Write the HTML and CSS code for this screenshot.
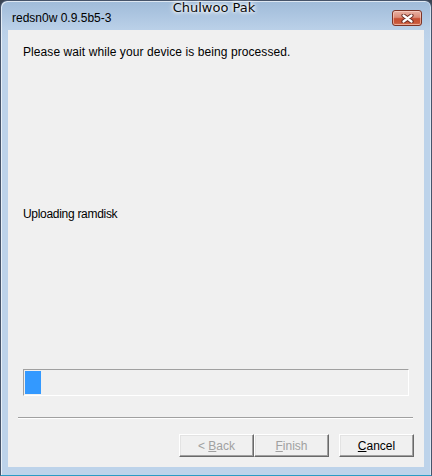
FILE: index.html
```html
<!DOCTYPE html>
<html lang="en">
<head>
<meta charset="utf-8">
<title>redsn0w 0.9.5b5-3</title>
<link rel="stylesheet" href="styles.css">
</head>
<body>
<div class="window">
  <div class="titlebar">
    <span class="app-title">redsn0w 0.9.5b5-3</span>
    <span class="caption">Chulwoo Pak</span>
    <button class="close" aria-label="Close">
      <svg width="13" height="9" viewBox="0 0 13 9">
        <path d="M2.5 1.5 L10.5 7.5 M10.5 1.5 L2.5 7.5" stroke="#6a2b22" stroke-width="4.2" stroke-linecap="round" fill="none"/>
        <path d="M2.5 1.5 L10.5 7.5 M10.5 1.5 L2.5 7.5" stroke="#ffffff" stroke-width="2.2" stroke-linecap="round" fill="none"/>
      </svg>
    </button>
  </div>
  <div class="client">
    <p class="msg">Please wait while your device is being processed.</p>
    <p class="status">Uploading ramdisk</p>
    <div class="progress"><div class="chunk"></div></div>
    <div class="sep"></div>
    <div class="buttons">
      <button class="btn" disabled>&lt; <u>B</u>ack</button>
      <button class="btn" disabled><u>F</u>inish</button>
      <button class="btn cancel"><u>C</u>ancel</button>
    </div>
  </div>
</div>
</body>
</html>
```
FILE: styles.css
```css
html, body {
  margin: 0;
  padding: 0;
  background: #3a4452;
}
.window {
  width: 432px;
  height: 476px;
  box-sizing: border-box;
  border: 1px solid #46546a;
  border-bottom-color: #2a9cc4;
  border-radius: 7px 7px 0 0;
  background: linear-gradient(to bottom, #9fbbd9 0px, #bad0e8 28px, #bdd3ea 40px, #bdd3ea 100%);
  box-shadow: inset 1px 1px 0 rgba(255,255,255,0.65), inset -1px 0 0 rgba(255,255,255,0.45);
  display: flex;
  flex-direction: column;
  padding: 0 7px 8px 7px;
  font-family: "Liberation Sans", Arial, sans-serif;
  font-size: 12px;
  color: #000;
}
.titlebar {
  position: relative;
  height: 29px;
  display: flex;
  align-items: flex-start;
  margin: 0 -7px;
}
.app-title {
  margin-top: 10px;
  margin-left: 11px;
  line-height: 14px;
  font-size: 12px;
  white-space: nowrap;
}
.caption {
  position: absolute;
  left: 0;
  right: 4px;
  top: -1px;
  text-align: center;
  font-family: "DejaVu Sans", Verdana, sans-serif;
  font-size: 13px;
  line-height: 16px;
  color: #0a0a0a;
  text-shadow: 0 0 3px #fff, 0 0 4px #fff, 0 0 6px rgba(255,255,255,0.9);
}
.close {
  margin-left: auto;
  margin-right: 9px;
  margin-top: 9px;
  width: 30px;
  height: 16px;
  padding: 0;
  border: 1px solid #7c3326;
  border-radius: 3px;
  background: linear-gradient(to bottom, #e9b2a4 0%, #dc8c78 45%, #c74f33 55%, #c9583a 85%, #d77a5c 100%);
  box-shadow: inset 0 0 0 1px rgba(255,220,210,0.55);
  display: flex;
  align-items: center;
  justify-content: center;
}
.close svg {
  display: block;
}
.client {
  flex: 1;
  background: #f0f0f0;
  display: flex;
  flex-direction: column;
  padding: 15px 0 10px 0;
}
.msg, .status {
  margin: 0 0 0 15px;
  line-height: 14px;
  white-space: nowrap;
}
.msg {
  letter-spacing: 0.08px;
}
.status {
  margin-top: 148px;
  letter-spacing: -0.3px;
}
.progress {
  margin: 148px 15px 0 15px;
  height: 27px;
  box-sizing: border-box;
  border: 1px solid;
  border-color: #a0a0a0 #ffffff #ffffff #a0a0a0;
  padding: 1px;
  display: flex;
}
.chunk {
  width: 16px;
  background: #3399ff;
}
.sep {
  margin: 21px 11px 0 10px;
  height: 1px;
  background: #a0a0a0;
  border-bottom: 1px solid #ffffff;
}
.buttons {
  margin-top: 15px;
  padding-right: 10px;
  display: flex;
  justify-content: flex-end;
}
.btn {
  width: 75px;
  height: 23px;
  box-sizing: border-box;
  padding: 0;
  background: #f0f0f0;
  border: 1px solid;
  border-color: #ffffff #696969 #696969 #ffffff;
  box-shadow: inset -1px -1px 0 #a0a0a0, inset 1px 1px 0 #e3e3e3;
  font-family: "Liberation Sans", Arial, sans-serif;
  font-size: 12px;
  line-height: 14px;
  color: #000;
}
.btn:disabled {
  color: #a0a0a0;
}
.btn.cancel {
  margin-left: 10px;
}
```
